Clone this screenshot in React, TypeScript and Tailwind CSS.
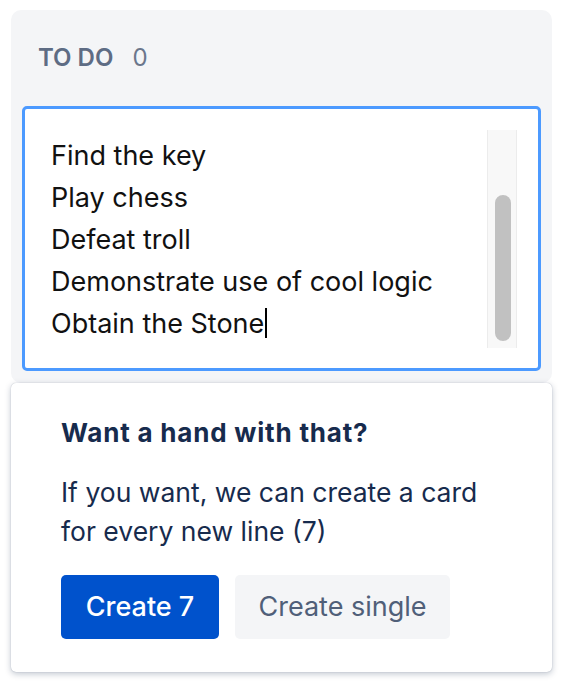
import React from 'react';

const lines = ['Find the key', 'Play chess', 'Defeat troll', 'Demonstrate use of cool logic', 'Obtain the Stone'];

export default function App() {
    return (
        <div className="min-h-[686px] bg-white pt-[10px] pl-[11px] pr-[10px]" style={{ fontFamily: 'Inter, "Noto Sans", sans-serif' }}>
            {/* Column */}
            <div className="h-[373px] rounded-[10px] bg-[#f4f5f7] px-[11px]">
                <div className="flex h-[96px] items-center gap-[19px] pl-[16px]">
                    <span className="text-[24px] font-semibold text-[#5e6c84]">TO DO</span>
                    <span className="text-[24px] text-[#6b778c]">0</span>
                </div>

                {/* Text area */}
                <div className="flex h-[265px] rounded-[5px] border-[3px] border-[#4c9aff] bg-white">
                    <div className="flex-1 pl-[26px] pt-[26px] text-[27px] leading-[42px] text-[#111]">
                        {lines.map((l, i) => (
                            <div key={l}>
                                {l}
                                {i === lines.length - 1 && <span className="ml-px inline-block h-[30px] w-[2px] translate-y-[5px] bg-black" />}
                            </div>
                        ))}
                    </div>
                    <div className="mr-[21px] mt-[21px] flex h-[218px] w-[30px] flex-col border-x border-[#ececec] bg-[#f8f8f8] pl-[7px] pt-[65px]">
                        <div className="h-[146px] w-[16px] rounded-full bg-[#c1c1c1]" />
                    </div>
                </div>
            </div>

            {/* Suggestion card */}
            <div className="h-[289px] rounded-[5px] bg-white pl-[50px] pt-[36px] shadow-[0_2px_6px_rgba(9,30,66,0.25),0_0_1px_rgba(9,30,66,0.31)]">
                <div className="text-[26px] font-bold leading-[28px] tracking-[0.8px] text-[#172b4d]">Want a hand with that?</div>
                <p className="mt-[26px] text-[26.5px] leading-[39px] text-[#172b4d]">
                    If you want, we can create a card
                    <br />
                    for every new line (7)
                </p>
                <div className="mt-[24px] flex gap-[16px]">
                    <button className="h-[64px] w-[158px] rounded-[5px] bg-[#0052cc] text-[27px] font-medium text-white">Create 7</button>
                    <button className="h-[64px] w-[215px] rounded-[5px] bg-[#f4f5f7] text-[27px] text-[#505f79]">Create single</button>
                </div>
            </div>
        </div>
    );
}
